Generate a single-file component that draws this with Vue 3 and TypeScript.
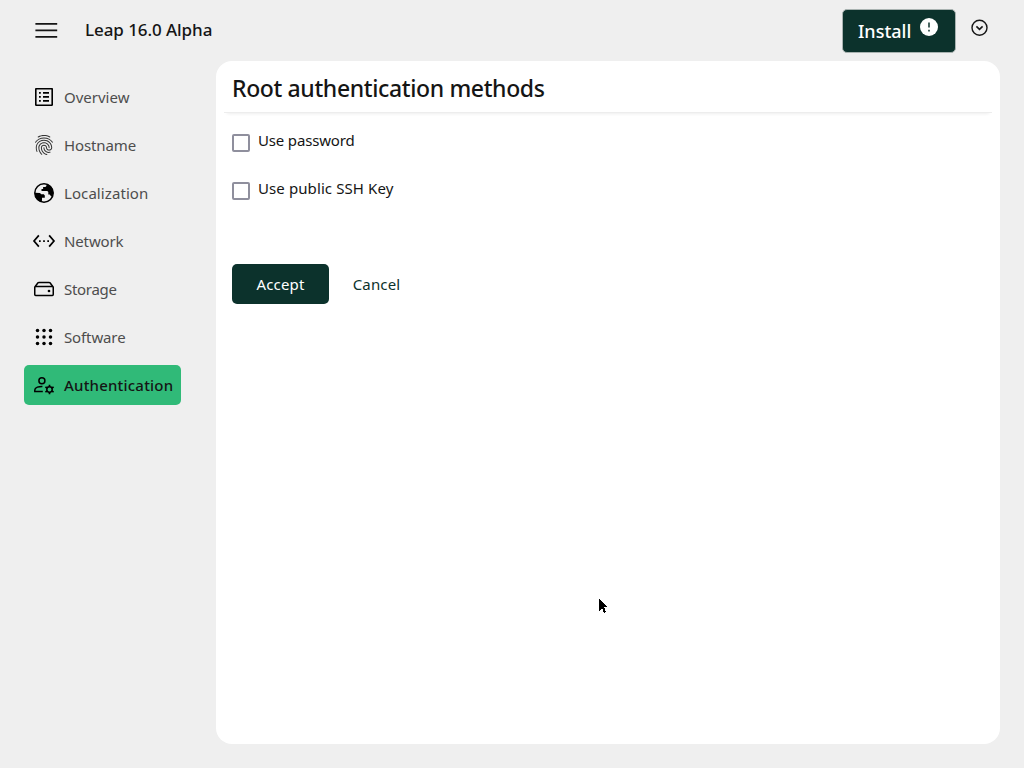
<script setup lang="ts">
import { ref } from 'vue'

interface NavItem {
  name: string
  icon: string
}

const items: NavItem[] = [
  { name: 'Overview', icon: 'list' },
  { name: 'Hostname', icon: 'fingerprint' },
  { name: 'Localization', icon: 'globe' },
  { name: 'Network', icon: 'ethernet' },
  { name: 'Storage', icon: 'disk' },
  { name: 'Software', icon: 'apps' },
  { name: 'Authentication', icon: 'user' },
]
const active = ref('Authentication')
const usePassword = ref(false)
const useSshKey = ref(false)
const dots = [5.5, 12, 18.5]
</script>

<template>
  <div class="page">
    <header class="masthead">
      <button class="menu" aria-label="Main navigation">
        <svg width="24" height="18" viewBox="0 0 24 18"><path d="M1.4 2.8h21.8M1.4 9.4h21.8M1.4 15.8h21.8" stroke="#151515" stroke-width="1.8" /></svg>
      </button>
      <h1><span class="t-brand">Leap 16.0 Alpha</span></h1>
      <button class="install">
        <span>Install</span>
        <svg width="18" height="18" viewBox="0 0 18 18"><circle cx="9" cy="9" r="9" fill="#fff" /><path d="M9 4.4v5.2M9 11.8v1.7" stroke="#0c322c" stroke-width="1.5" /></svg>
      </button>
      <button class="options" aria-label="Options">
        <svg width="18" height="18" viewBox="0 0 18 18" fill="none" stroke="#151515"><circle cx="9.5" cy="8.7" r="7.5" stroke-width="1.4" /><path d="m6.4 7.4 3.1 3 3.1-3" stroke-width="1.6" /></svg>
      </button>
    </header>

    <div class="body">
      <nav>
        <a v-for="item in items" :key="item.name" :class="['item', item.icon, { active: item.name === active }]" @click="active = item.name">
          <svg width="24" height="24" viewBox="0 0 24 24">
            <path v-if="item.icon === 'list'" d="M19.4 4.6v14.8H4.6V4.6h14.8M20.1 3H3.9c-.5 0-.9.4-.9.9v16.2c0 .4.4.9.9.9h16.2c.4 0 .9-.5.9-.9V3.9c0-.5-.5-.9-.9-.9zM11 7h6v1.8h-6V7zm0 4h6v1.8h-6V11zm0 4h6v1.8h-6zM7 7h1.8v1.8H7zm0 4h1.8v1.8H7zm0 4h1.8v1.8H7z" />
            <path v-else-if="item.icon === 'fingerprint'" fill="#333" d="M17.81 4.47c-.08 0-.16-.02-.23-.06C15.66 3.42 14 3 12.01 3c-1.98 0-3.86.47-5.57 1.41-.24.13-.54.04-.68-.2-.13-.24-.04-.55.2-.68C7.82 2.52 9.86 2 12.01 2c2.13 0 3.99.47 6.03 1.52.25.13.34.43.21.67-.09.18-.26.28-.44.28zM3.5 9.72c-.1 0-.2-.03-.29-.09-.23-.16-.28-.47-.12-.7.99-1.4 2.25-2.5 3.75-3.27C9.98 4.04 14 4.03 17.15 5.65c1.5.77 2.76 1.86 3.75 3.25.16.22.11.54-.12.7-.23.16-.54.11-.7-.12-.9-1.26-2.04-2.25-3.39-2.94-2.87-1.47-6.54-1.47-9.4.01-1.36.7-2.5 1.7-3.4 2.96-.08.14-.23.21-.39.21zm6.25 12.07c-.13 0-.26-.05-.35-.15-.87-.87-1.34-1.43-2.01-2.64-.69-1.23-1.05-2.73-1.05-4.34 0-2.97 2.54-5.39 5.66-5.39s5.66 2.42 5.66 5.39c0 .28-.22.5-.5.5s-.5-.22-.5-.5c0-2.42-2.09-4.39-4.66-4.39-2.57 0-4.66 1.97-4.66 4.39 0 1.44.32 2.77.93 3.85.64 1.15 1.08 1.64 1.85 2.42.19.2.19.51 0 .71-.11.1-.24.15-.37.15zm7.17-1.85c-1.19 0-2.24-.3-3.1-.89-1.49-1.01-2.38-2.65-2.38-4.39 0-.28.22-.5.5-.5s.5.22.5.5c0 1.41.72 2.74 1.94 3.56.71.48 1.54.71 2.54.71.24 0 .64-.03 1.04-.1.27-.05.53.13.58.41.05.27-.13.53-.41.58-.57.11-1.07.12-1.21.12zM14.91 22c-.04 0-.09-.01-.13-.02-1.59-.44-2.63-1.03-3.72-2.1-1.4-1.39-2.17-3.24-2.17-5.22 0-1.62 1.38-2.94 3.08-2.94 1.7 0 3.08 1.32 3.08 2.94 0 1.07.93 1.94 2.08 1.94s2.08-.87 2.08-1.94c0-3.77-3.25-6.83-7.25-6.83-2.84 0-5.44 1.58-6.61 4.03-.39.81-.59 1.76-.59 2.8 0 .78.07 2.01.67 3.61.1.26-.03.55-.29.64-.26.1-.55-.04-.64-.29-.49-1.31-.73-2.61-.73-3.96 0-1.2.23-2.29.68-3.24 1.33-2.79 4.28-4.6 7.51-4.6 4.55 0 8.25 3.51 8.25 7.83 0 1.62-1.38 2.94-3.08 2.94s-3.08-1.32-3.08-2.94c0-1.07-.93-1.94-2.08-1.94s-2.08.87-2.08 1.94c0 1.71.66 3.31 1.87 4.51.95.94 1.86 1.46 3.27 1.85.27.07.42.35.35.61-.05.23-.26.38-.47.38z" />
            <g v-else-if="item.icon === 'globe'">
              <circle cx="12" cy="12" r="9.2" fill="none" stroke="#000" stroke-width="1.5" />
              <path d="M2.8 11.8 8 12l1.2 1.3h2.6l1 1.2v2.3H10V19l-.3 1.9C5.4 20 2.6 16.4 2.8 11.8zM14.4 3.1V5l-1 1h-2.3v2H9.5v2h5.8l1 1v2.5h1.4l1.3 1.7.5.6c1-1.2 1.7-2.4 1.7-4.3 0-4.1-2.6-7.6-6.8-8.4z" />
            </g>
            <path v-else-if="item.icon === 'ethernet'" d="M7.5 6.9 6.2 5.8.9 12l5.3 6.2 1.3-1.1L3.1 12zM7 12.9h1.7v-1.7H7zm8.3 0H17v-1.7h-1.7zm-4.15 0h1.7v-1.7h-1.7zM16.5 6.9l1.3-1.1 5.3 6.2-5.3 6.2-1.3-1.1 4.4-5.1z" />
            <g v-else-if="item.icon === 'disk'" fill="none" stroke="#000" stroke-width="1.5" stroke-linejoin="round">
              <rect x="2.75" y="9.4" width="18.5" height="9" rx=".9" />
              <path d="m3 9.7 3-3.9q.3-.4.9-.4h10.2q.6 0 .9.4l3 3.9" />
              <circle cx="17" cy="14" r="1.35" fill="#000" stroke="none" />
            </g>
            <g v-else-if="item.icon === 'apps'">
              <template v-for="y in dots" :key="y"><circle v-for="x in dots" :key="x" :cx="x" :cy="y" r="1.75" /></template>
            </g>
            <g v-else fill="none" stroke="#000" stroke-width="1.5">
              <circle cx="9.9" cy="7.8" r="3" />
              <path d="M10.8 18.6H2.8v-1.7c0-2.5 4.3-3.6 7.6-3.5" />
              <circle cx="17.5" cy="16.5" r="2.7" />
              <path d="M17.5 11.8v2M17.5 19.2v2M13.4 14.1l1.8 1M19.8 17.9l1.8 1M13.4 18.9l1.8-1M19.8 15.1l1.8-1" stroke-width="1.7" />
            </g>
          </svg>
          <span>{{ item.name }}</span>
        </a>
      </nav>

      <main>
        <div class="title"><h2><span class="t-title">Root authentication methods</span></h2></div>
        <form @submit.prevent>
          <label><input v-model="usePassword" type="checkbox"><span class="t-pass">Use password</span></label>
          <label><input v-model="useSshKey" type="checkbox"><span class="t-ssh">Use public SSH Key</span></label>
          <div class="actions">
            <button class="accept"><span>Accept</span></button>
            <button class="cancel" type="button"><span>Cancel</span></button>
          </div>
        </form>
      </main>
    </div>
    <svg class="pointer" width="8" height="14" viewBox="0 0 8 14"><path d="M0 0v12l3-3 2 5 2-1-2-5h3z" shape-rendering="crispEdges" /></svg>
  </div>
</template>

<style>
body { background: #efefef; }
</style>

<style scoped>
.page {
  box-sizing: border-box;
  height: 768px;
  display: flex;
  flex-direction: column;
  overflow: hidden;
  background: #efefef;
  color: #151515;
  font: 15px/24px "Noto Sans", "Open Sans", sans-serif;
}
svg { display: block; flex: none; }
span { white-space: nowrap; }
h1, h2 { margin: 0; }
button { border: 0; padding: 0; background: none; font: inherit; color: inherit; }
.masthead { height: 61px; flex: none; display: flex; align-items: flex-start; }
.menu { margin: 21px 0 0 34px; }
h1 { margin: 18px 0 0 27px; font-size: 17px; line-height: 24px; font-weight: 500; letter-spacing: -.07px; }
.install {
  box-sizing: border-box;
  width: 114px;
  height: 44px;
  margin: 8.5px 0 0 auto;
  padding: 0 0 0 15px;
  display: flex;
  border: 1px solid #a9b3b1;
  border-radius: 5px;
  background: #0c322c;
  color: #fff;
  font-size: 18px;
  font-weight: 500;
  line-height: 43px;
}
.install svg { margin: 8.5px 0 0 9px; }
.options { margin: 19px 36px 0 14px; }
.body { flex: 1; min-height: 0; display: flex; }
nav { width: 157px; margin: 16px 35px 0 24px; flex: none; display: flex; flex-direction: column; gap: 8px; }
.item {
  height: 40px;
  box-sizing: border-box;
  padding: 0 8px;
  display: flex;
  align-items: center;
  gap: 8px;
  border-radius: 5px;
  color: #4d4d4d;
}
.item.active { background: #30ba78; color: #151515; font-weight: 500; letter-spacing: .2px; }
.fingerprint, .ethernet, .apps { letter-spacing: -.12px; }
.globe { letter-spacing: .08px; }
.disk { letter-spacing: -.3px; }
main { width: 784px; height: 683px; box-sizing: border-box; border-radius: 16px; background: #fff; }
.title { height: 51px; margin: 0 8px; border-bottom: 1px solid #ededed; box-shadow: 0 4px 3px -3px #00000012; }
h2 { padding: 11px 8px 0; font-size: 23px; line-height: 32px; font-weight: 500; letter-spacing: -.37px; }
form { padding: 15px 16px; }
label { display: flex; height: 24px; margin-bottom: 24px; }
input { appearance: none; box-sizing: border-box; width: 18px; height: 18px; margin: 6px 8px 0 0; border: 2px solid #8f8f9d; border-radius: 2px; background: #fff; }
.t-pass { letter-spacing: -.17px; }
.t-ssh { letter-spacing: .1px; }
.actions { display: flex; padding-top: 40px; }
.accept { width: 97px; height: 40px; border-radius: 5px; background: #0c322c; color: #fff; letter-spacing: .15px; }
.cancel { width: 95px; height: 40px; color: #0c322c; letter-spacing: .15px; }
.pointer { position: absolute; left: 599px; top: 599px; }
</style>
